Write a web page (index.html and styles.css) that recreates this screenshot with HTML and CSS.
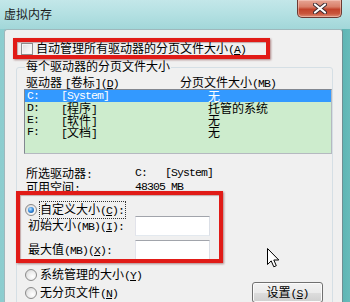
FILE: index.html
```html
<!DOCTYPE html>
<html lang="zh-CN">
<head>
<meta charset="utf-8">
<title>虚拟内存</title>
<link rel="stylesheet" href="styles.css">
</head>
<body>
<div class="window">
  <div class="titlebar">
    <span class="title">虚拟内存</span>
    <div class="close">
      <svg width="14" height="11" viewBox="0 0 14 11"><path d="M2 1.5 L12 9.5 M12 1.5 L2 9.5" stroke="#3a2a30" stroke-width="4" stroke-linecap="round"/><path d="M2 1.5 L12 9.5 M12 1.5 L2 9.5" stroke="#ffffff" stroke-width="2.2" stroke-linecap="round"/></svg>
    </div>
  </div>
  <div class="client">
    <div class="auto-row"><span class="cb"></span><span>自动管理所有驱动器的分页文件大小<span class="a">(<u>A</u>)</span></span></div>
    <div class="group">
      <div class="group-title">每个驱动器的分页文件大小</div>
      <div class="list-head"><span>驱动器 <span class="a">[</span>卷标<span class="a">](<u>D</u>)</span></span><span>分页文件大小<span class="a">(MB)</span></span></div>
      <div class="list">
        <div class="row sel"><span class="a">C:</span><span class="a">[System]</span><span>无</span></div>
        <div class="row"><span class="a">D:</span><span><span class="a">[</span>程序<span class="a">]</span></span><span>托管的系统</span></div>
        <div class="row"><span class="a">E:</span><span><span class="a">[</span>软件<span class="a">]</span></span><span>无</span></div>
        <div class="row"><span class="a">F:</span><span><span class="a">[</span>文档<span class="a">]</span></span><span>无</span></div>
      </div>
      <div class="info">
        <span>所选驱动器<span class="a">:</span></span><span class="a">C:&nbsp;&nbsp;&nbsp;[System]</span>
        <span>可用空间<span class="a">:</span></span><span class="a">48305 MB</span>
      </div>
      <div class="radio-row first"><span class="rb on"></span><span class="focus">自定义大小<span class="a">(<u>C</u>):</span></span></div>
      <div class="field"><span class="lbl">初始大小<span class="a">(MB)(<u>I</u>):</span></span><span class="input"></span></div>
      <div class="field second"><span class="lbl">最大值<span class="a">(MB)(<u>X</u>):</span></span><span class="input"></span></div>
      <div class="radio-row sys"><span class="rb"></span><span>系统管理的大小<span class="a">(<u>Y</u>)</span></span></div>
      <div class="last-row">
        <div class="radio-row"><span class="rb"></span><span>无分页文件<span class="a">(<u>N</u>)</span></span></div>
        <button class="btn">设置<span class="a">(<u>S</u>)</span></button>
      </div>
    </div>
  </div>
  <div class="mark mark1"></div>
  <div class="mark mark2"></div>
  <svg class="cursor" width="13" height="20" viewBox="0 0 13 20"><path d="M0.5 0.5 L0.5 16.5 L4.2 12.9 L6.8 18.8 L9.3 17.7 L6.8 12 L11.8 12 Z" fill="#ffffff" stroke="#000000" stroke-width="1" stroke-linejoin="miter"/></svg>
</div>
</body>
</html>
```

FILE: styles.css
```css
html, body {
  margin: 0;
  padding: 0;
}
body {
  width: 350px;
  height: 302px;
  overflow: hidden;
  font-family: "Noto Sans CJK SC", "Liberation Sans", sans-serif;
  font-size: 12px;
  color: #000;
}
.a {
  font-family: "Liberation Mono", "Noto Sans CJK SC", monospace;
  font-size: 11.5px;
  letter-spacing: -0.9px;
}
u {
  text-decoration: underline;
  text-underline-offset: 1px;
}
.window {
  position: relative;
  width: 350px;
  height: 302px;
  overflow: hidden;
  background: linear-gradient(to right, #8ccdcf 0, #a3d8da 50%, #86c9ca 94%, #5bb3b2 97%, #68bbba 100%);
  display: flex;
  flex-direction: column;
}
.titlebar {
  height: 29px;
  flex: none;
  display: flex;
  align-items: flex-start;
  background: linear-gradient(to bottom, #c3e7e9 0, #b3e0e2 50%, #a2d7d9 100%);
}
.title {
  margin: 7px 0 0 4px;
  line-height: 14px;
  font-size: 12px;
  color: #1a1a1a;
}
.close {
  margin-left: auto;
  margin-right: 8px;
  width: 43px;
  height: 17px;
  border: 1px solid #6b3a33;
  border-top: none;
  border-radius: 0 0 5px 5px;
  background: linear-gradient(to bottom, #e7a595 0, #d97f69 40%, #c2432b 55%, #c9553c 80%, #dd8f77 100%);
  box-shadow: inset 0 0 0 1px rgba(255, 220, 210, 0.45);
  display: flex;
  align-items: center;
  justify-content: center;
}
.client {
  margin: 0 7px 0 4px;
  height: 290px;
  flex: none;
  background: #f0f0f0;
  border: 1px solid #9fb8bc;
  border-right-color: #6f8f93;
  border-radius: 3px 3px 0 0;
  display: flex;
  flex-direction: column;
}
.auto-row {
  margin-top: 12px;
  padding-left: 16px;
  height: 14px;
  line-height: 14px;
  display: flex;
  align-items: center;
  gap: 3px;
}
.cb {
  width: 10px;
  height: 10px;
  border: 1px solid #8e8f8f;
  background: linear-gradient(135deg, #dcdcdc 0, #f4f4f4 60%, #ffffff 100%);
  box-shadow: inset 0 0 0 1px #f4f4f4;
  flex: none;
}
.group {
  margin: 11px 9px 0 11px;
  border: 1px solid #d5dfe5;
  border-radius: 3px;
  flex: 1;
  display: flex;
  flex-direction: column;
}
.group-title {
  margin: -9px 0 0 8px;
  padding: 0 1px;
  line-height: 14px;
  height: 14px;
  background: #f0f0f0;
  align-self: flex-start;
}
.list-head {
  margin-top: 2px;
  padding-left: 9px;
  height: 14px;
  line-height: 14px;
  display: grid;
  grid-template-columns: 154px auto;
}
.list {
  margin: 0 0 0 7px;
  height: 63px;
  border: 1px solid #828790;
  border-right-color: #b5b9c0;
  border-bottom-color: #b5b9c0;
  background: #cdeccd;
}
.row {
  height: 12px;
  line-height: 12px;
  padding-left: 2px;
  display: grid;
  grid-template-columns: 34px 147px auto;
}
.row.sel {
  background: #3399ff;
  color: #fff;
  margin-right: 0;
}
.info {
  margin-top: 13px;
  padding-left: 9px;
  display: grid;
  grid-template-columns: 109px auto;
  line-height: 12px;
}
.radio-row {
  padding-left: 8px;
  height: 14px;
  line-height: 14px;
  display: flex;
  align-items: center;
  gap: 3px;
}
.radio-row.first {
  margin-top: 8px;
}
.radio-row.sys {
  margin-top: 8px;
}
.focus {
  outline: 1px dotted #333;
  outline-offset: 0;
  padding: 0 1px 0 0;
}
.rb {
  width: 10px;
  height: 10px;
  border: 1px solid #8a8a8a;
  border-radius: 50%;
  background: radial-gradient(circle at 65% 65%, #ffffff 0, #eeeeee 45%, #cfcfcf 100%);
  flex: none;
  position: relative;
}
.rb.on::after {
  content: "";
  position: absolute;
  left: 2px;
  top: 2px;
  width: 6px;
  height: 6px;
  border-radius: 50%;
  background: radial-gradient(circle at 40% 35%, #bfe6ff 0, #3a8fe0 45%, #0d3f86 100%);
}
.field {
  margin-top: -1px;
  padding-left: 11px;
  height: 20px;
  display: flex;
  align-items: center;
}
.field.second {
  margin-top: 4px;
}
.lbl {
  width: 107px;
  line-height: 14px;
}
.input {
  width: 73px;
  height: 18px;
  border: 1px solid #abadb3;
  border-top-color: #a1a4ab;
  border-left-color: #e2e3ea;
  border-right-color: #dbdfe6;
  border-bottom-color: #e3e9ef;
  background: #fff;
}
.last-row {
  height: 21px;
  display: flex;
  align-items: center;
  justify-content: space-between;
  padding-right: 9px;
}
.btn {
  width: 71px;
  height: 21px;
  padding: 0;
  border: 1px solid #707070;
  border-radius: 3px;
  background: linear-gradient(to bottom, #f2f2f2 0, #ebebeb 50%, #dddddd 51%, #cfcfcf 100%);
  box-shadow: inset 0 0 0 1px #fbfbfb;
  font-family: "Noto Sans CJK SC", sans-serif;
  font-size: 12px;
  line-height: 17px;
  color: #000;
}
.mark {
  position: absolute;
  border: 4px solid #e11b17;
  box-shadow: 1px 1px 2px rgba(90, 0, 0, 0.45), inset 1px 1px 1px rgba(90, 0, 0, 0.3);
}
.mark1 {
  left: 13px;
  top: 38px;
  width: 249px;
  height: 13px;
}
.mark2 {
  left: 16px;
  top: 191px;
  width: 199px;
  height: 64px;
}
.cursor {
  position: absolute;
  left: 267px;
  top: 248px;
}
```
